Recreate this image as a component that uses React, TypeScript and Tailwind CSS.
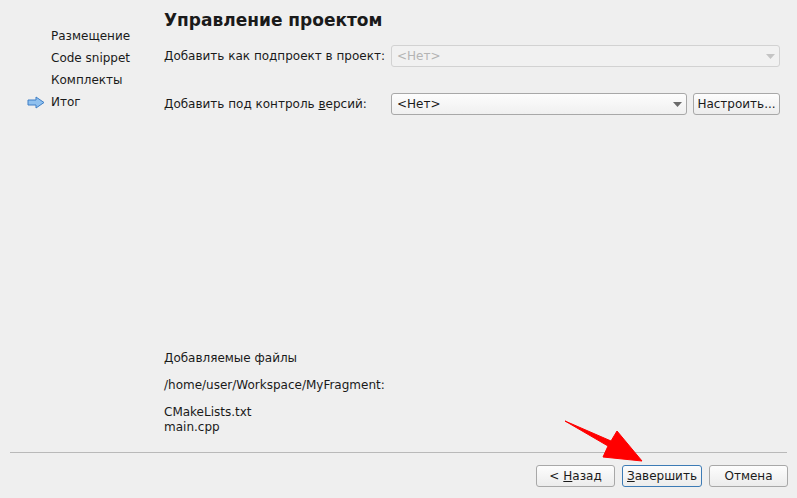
import { ChevronDown } from "lucide-react";

const font = { fontFamily: '"DejaVu Sans", "Noto Sans", sans-serif' };

function SideItem({ label, current }: { label: string; current?: boolean }) {
  return (
    <div className="relative h-[22px] flex items-center pl-[51px] text-[12px] text-[#1a1a1a]">
      {current && (
        <svg className="absolute left-[27px] top-[5px]" width="18" height="13" viewBox="0 0 18 13">
          <path
            d="M1 4 H9 V1 L17 6.5 L9 12 V9 H1 Z"
            fill="#8fc0ee"
            stroke="#3f7fc6"
            strokeWidth="1"
            strokeLinejoin="round"
          />
        </svg>
      )}
      {label}
    </div>
  );
}

function Combo({ value, disabled, className }: { value: string; disabled?: boolean; className?: string }) {
  return (
    <div
      className={
        "h-[22px] flex items-center justify-between pl-[5px] pr-[4px] rounded-[3px] border text-[12px] " +
        (disabled
          ? "border-[#d2d2d2] bg-[#f1f1f1] text-[#b4b4b4] "
          : "border-[#a8a8a8] bg-gradient-to-b from-[#fdfdfd] to-[#f0f0f0] text-[#1a1a1a] ") +
        (className ?? "")
      }
    >
      <span>{value}</span>
      <svg width="9" height="5" viewBox="0 0 9 5">
        <path d="M0 0 H9 L4.5 5 Z" fill={disabled ? "#c4c4c4" : "#6a6a6a"} />
      </svg>
    </div>
  );
}

function Button({ children, focused, className }: { children: React.ReactNode; focused?: boolean; className?: string }) {
  return (
    <div
      className={
        "h-[22px] flex items-center justify-center rounded-[3px] border bg-gradient-to-b from-[#fdfdfd] to-[#ececec] text-[12px] text-[#1a1a1a] " +
        (focused ? "border-[#3d7bb5] " : "border-[#a8a8a8] ") +
        (className ?? "")
      }
    >
      {children}
    </div>
  );
}

export default function App() {
  return (
    <div className="relative w-[797px] h-[498px] bg-[#efefef] flex flex-col overflow-hidden" style={font}>
      <div className="flex flex-1">
        <div className="w-[164px] pt-[25px] flex flex-col">
          <SideItem label="Размещение" />
          <SideItem label="Code snippet" />
          <SideItem label="Комплекты" />
          <SideItem label="Итог" current />
        </div>
        <div className="flex-1 flex flex-col pr-[17px] pt-[10px] text-[12px] text-[#1a1a1a]">
          <div className="text-[17px] font-bold leading-[20px] h-[35px]">Управление проектом</div>
          <div className="flex items-center h-[22px]">
            <div className="w-[227px]">Добавить как подпроект в проект:</div>
            <Combo value="<Нет>" disabled className="flex-1" />
          </div>
          <div className="flex items-center h-[22px] mt-[26px]">
            <div className="w-[227px]">
              Добавить под контроль <span className="underline">в</span>ерсий:
            </div>
            <Combo value="<Нет>" className="flex-1" />
            <Button className="ml-[6px] w-[87px]">Настроить...</Button>
          </div>
          <div className="mt-auto pb-[17px] flex flex-col">
            <div className="leading-[15px]">Добавляемые файлы</div>
            <div className="leading-[15px] mt-[12px]">/home/user/Workspace/MyFragment:</div>
            <div className="leading-[15px] mt-[12px]">CMakeLists.txt</div>
            <div className="leading-[15px]">main.cpp</div>
          </div>
        </div>
      </div>
      <div className="mx-[10px] h-px bg-[#b9b9b9]" />
      <div className="flex justify-end gap-[7px] pr-[9px] pt-[12px] pb-[11px]">
        <Button className="w-[79px]">
          &lt; <span className="underline ml-[4px]">Н</span>азад
        </Button>
        <Button focused className="w-[80px]">
          <span className="underline">З</span>авершить
        </Button>
        <Button className="w-[79px]">Отмена</Button>
      </div>
      <svg className="absolute left-0 top-0 pointer-events-none" width="797" height="498" viewBox="0 0 797 498">
        <polygon
          points="565,421 611,441 617,431 642,461 603,457 608,446"
          fill="#ff0000"
          stroke="#ff0000"
          strokeWidth="1"
          strokeLinejoin="round"
        />
      </svg>
    </div>
  );
}
